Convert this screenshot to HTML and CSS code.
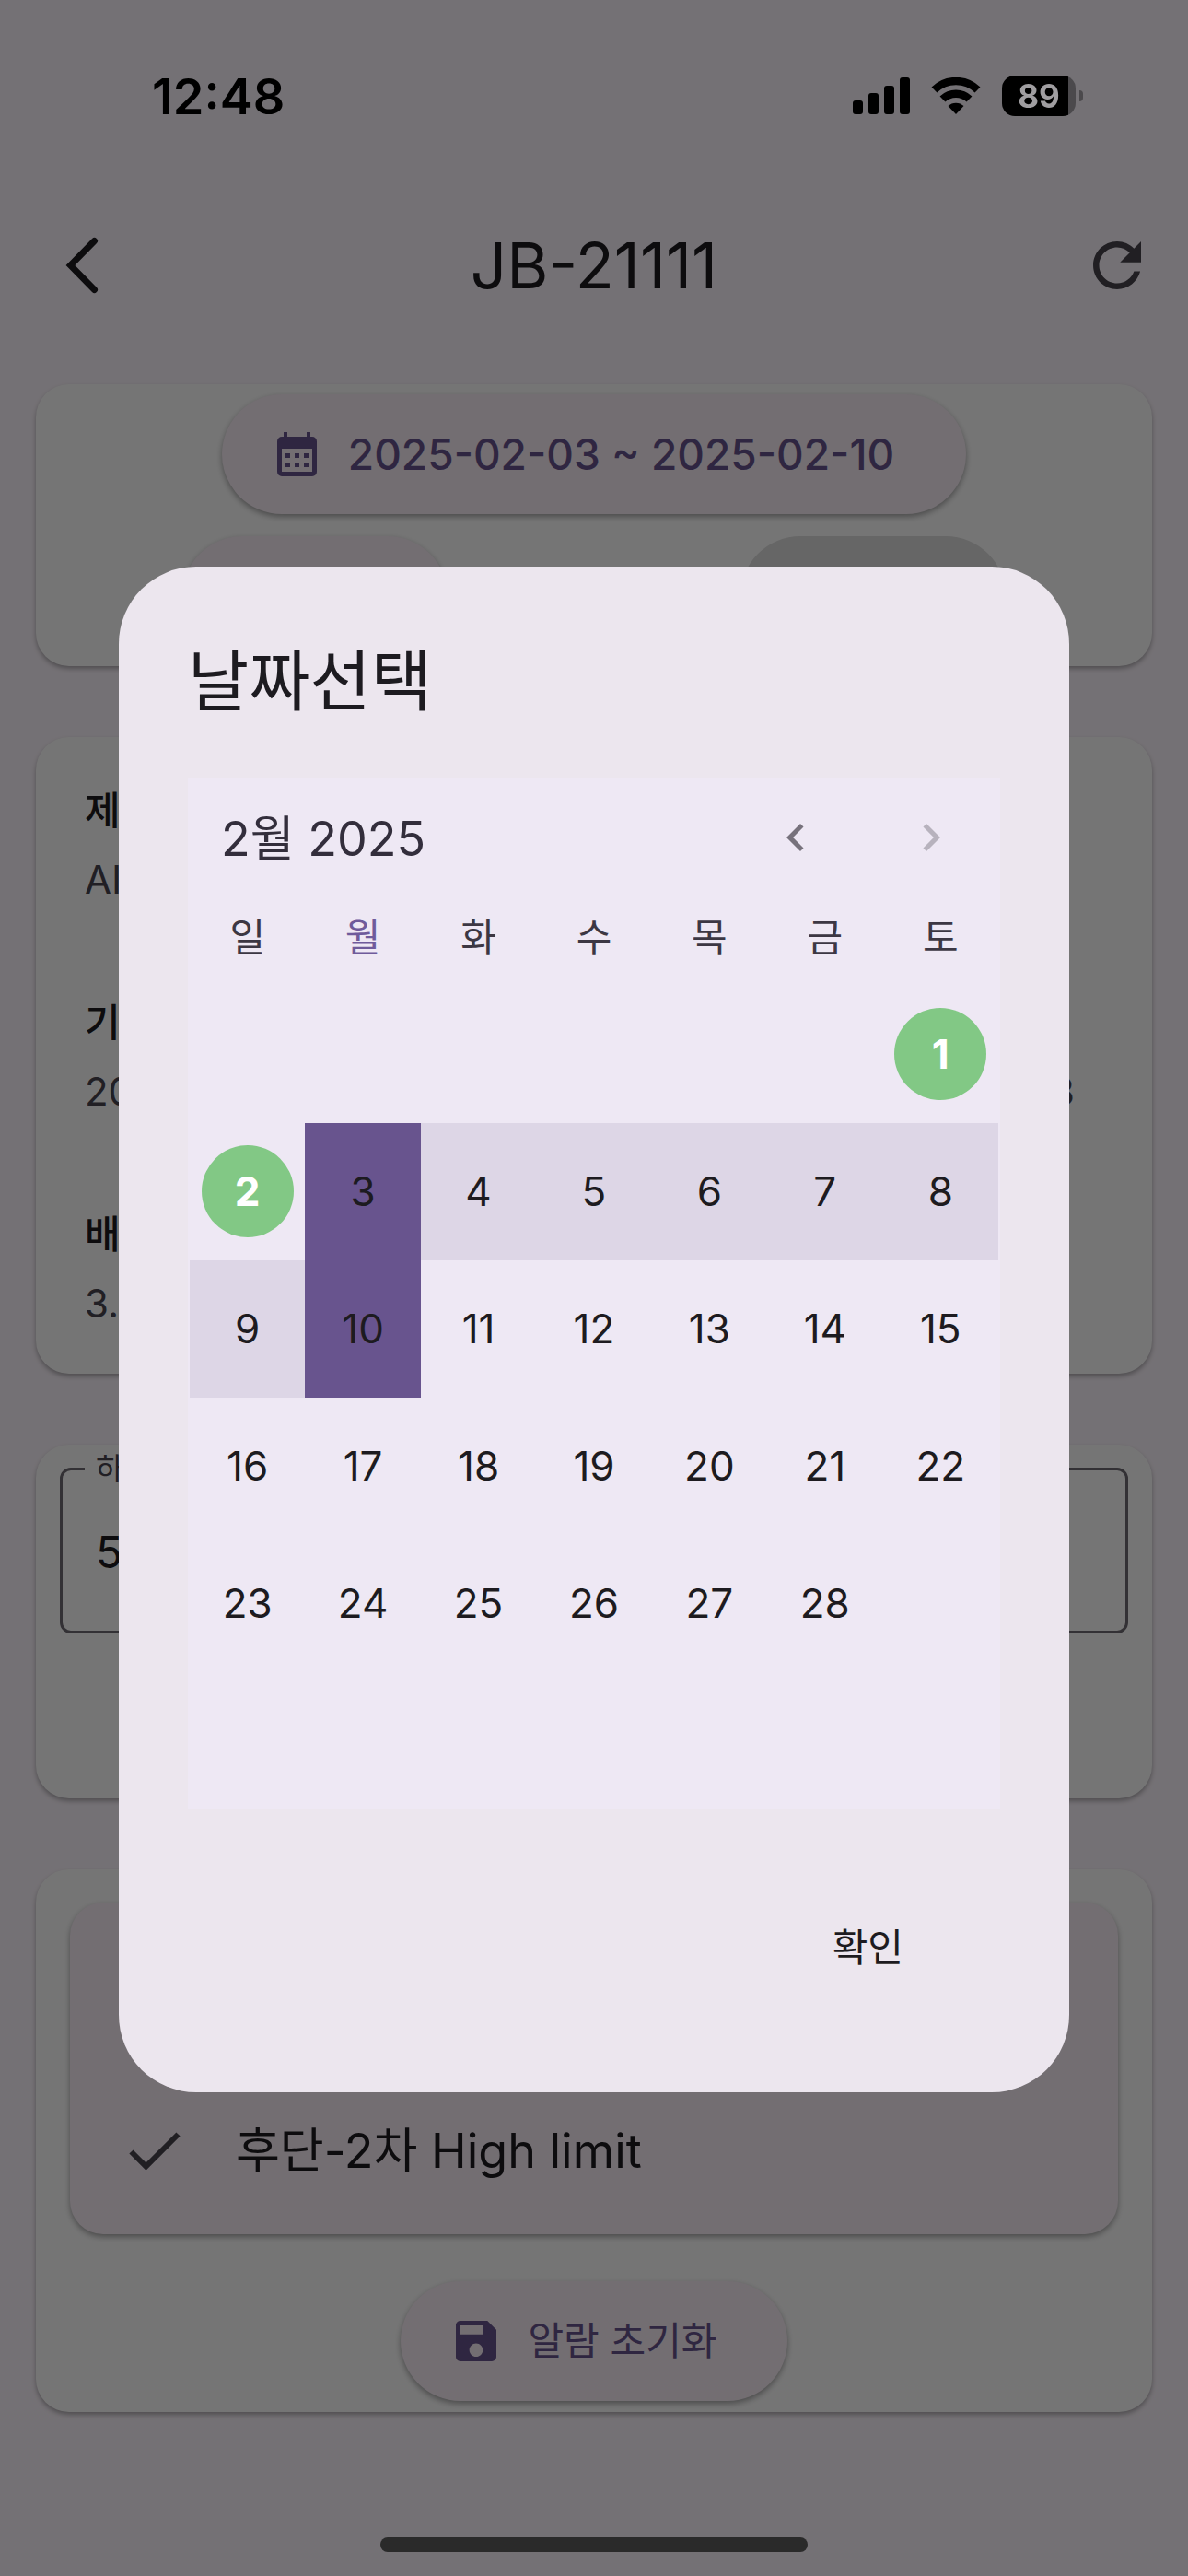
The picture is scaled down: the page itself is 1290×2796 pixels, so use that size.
FILE: index.html
```html
<!DOCTYPE html>
<html lang="ko">
<head>
    <meta charset="UTF-8">
    <meta name="viewport" content="width=device-width, initial-scale=1.0">
    <title>JB-21111</title>
    <link rel="stylesheet" href="styles.css">
</head>
<body>
    <div class="status-bar">
        <span class="time">12:48</span>
        <div class="status-icons">
            <svg width="62" height="40" viewBox="0 0 62 40">
                <rect x="0" y="25" width="11" height="15" rx="3"/>
                <rect x="17" y="17" width="11" height="23" rx="3"/>
                <rect x="34" y="9" width="11" height="31" rx="3"/>
                <rect x="51" y="0" width="11" height="40" rx="3"/>
            </svg>
            <svg class="wifi" width="54" height="40" viewBox="0 0 54 40">
                <path d="M3.500 13.500a34 34 0 0 1 47 0M12.500 23.500a21 21 0 0 1 29 0" fill="none" stroke="#000" stroke-width="8.500"/>
                <path d="M27 40l-8.500-9a12.500 12.500 0 0 1 17 0z"/>
            </svg>
            <div class="battery"><span>89</span></div>
        </div>
    </div>

    <header class="app-bar">
        <button class="icon-btn back" aria-label="뒤로">
            <svg width="36" height="62" viewBox="0 0 36 62"><path d="M31.500 4.500L5.500 31l26 26.500" fill="none" stroke="currentColor" stroke-width="7" stroke-linecap="round"/></svg>
        </button>
        <h1>JB-21111</h1>
        <button class="icon-btn refresh" aria-label="새로고침">
            <svg width="78" height="78" viewBox="0 0 24 24"><path d="M17.650 6.350C16.200 4.900 14.210 4 12 4c-4.420 0-7.990 3.580-7.990 8s3.570 8 7.990 8c3.730 0 6.840-2.550 7.730-6h-2.080c-.820 2.330-3.040 4-5.650 4-3.310 0-6-2.690-6-6s2.690-6 6-6c1.660 0 3.140.690 4.220 1.780L13 11h7V4l-2.350 2.350z" fill="currentColor"/></svg>
        </button>
    </header>

    <main>
        <section class="card search">
            <button class="pill">
                <svg width="43" height="48" viewBox="0 0 43 48" fill="currentColor">
                    <path fill-rule="evenodd" d="M7 0h4v5h21V0h4v5h2a5 5 0 0 1 5 5v33a5 5 0 0 1-5 5H5a5 5 0 0 1-5-5V10a5 5 0 0 1 5-5h2zM5 18v25h33V18z"/>
                    <path d="M9 23h5v5H9zM19 23h5v5h-5zM29 23h5v5h-5zM9 33h5v5H9zM19 33h5v5h-5zM29 33h5v5h-5z"/>
                </svg>
                2025-02-03 ~ 2025-02-10
            </button>
            <div class="actions">
                <button class="pill small" aria-label="조회"></button>
                <button class="pill small disabled" aria-label="다운로드" disabled></button>
            </div>
        </section>

        <section class="card info">
            <dl>
                <dt>제</dt>
                <dd>AI</dd>
                <dt>기</dt>
                <dd><span>20</span><span>3</span></dd>
                <dt>배</dt>
                <dd>3.</dd>
            </dl>
        </section>

        <section class="card limit">
            <fieldset>
                <legend><label for="low-limit">하</label></legend>
                <input id="low-limit" type="text" value="5">
            </fieldset>
        </section>

        <section class="card alarm">
            <div class="tile">
                <svg width="56" height="42" viewBox="0 0 56 42"><path d="M2.500 21.500L18.500 37.500L53.500 2.500" fill="none" stroke="currentColor" stroke-width="6"/></svg>
                <span>후단-2차 High limit</span>
            </div>
            <button class="pill">
                <svg width="44" height="44" viewBox="3 3 18 18"><path d="M17 3H5c-1.110 0-2 .900-2 2v14c0 1.100.890 2 2 2h14c1.100 0 2-.900 2-2V7l-4-4zm-5 16c-1.660 0-3-1.340-3-3s1.340-3 3-3 3 1.340 3 3-1.340 3-3 3zm3-10H5V5h10v4z" fill="currentColor"/></svg>
                알람 초기화
            </button>
        </section>
    </main>

    <div class="home-indicator"></div>

    <!-- Date picker -->
    <div class="scrim">
        <div class="dialog" role="dialog" aria-modal="true" aria-labelledby="dialog-title">
            <h2 id="dialog-title">날짜선택</h2>
            <div class="calendar">
                <div class="calendar-head">
                    <span class="month">2월 2025</span>
                    <button class="nav" aria-label="이전 달">
                        <svg width="60" height="60" viewBox="0 0 24 24"><path d="M15.410 7.410L14 6l-6 6 6 6 1.410-1.410L10.830 12z" fill="currentColor"/></svg>
                    </button>
                    <button class="nav" aria-label="다음 달" disabled>
                        <svg width="60" height="60" viewBox="0 0 24 24"><path d="M8.590 16.590L10 18l6-6-6-6-1.410 1.410L13.170 12z" fill="currentColor"/></svg>
                    </button>
                </div>
                <table>
                    <thead>
                        <tr><th>일</th><th class="current">월</th><th>화</th><th>수</th><th>목</th><th>금</th><th>토</th></tr>
                    </thead>
                    <tbody>
                        <tr>
                            <td></td><td></td><td></td><td></td><td></td><td></td>
                            <td><button class="marked">1</button></td>
                        </tr>
                        <tr>
                            <td><button class="marked">2</button></td>
                            <td class="edge"><button>3</button></td>
                            <td class="range"><button>4</button></td>
                            <td class="range"><button>5</button></td>
                            <td class="range"><button>6</button></td>
                            <td class="range"><button>7</button></td>
                            <td class="range"><button>8</button></td>
                        </tr>
                        <tr>
                            <td class="range"><button>9</button></td>
                            <td class="edge"><button>10</button></td>
                            <td><button>11</button></td>
                            <td><button>12</button></td>
                            <td><button>13</button></td>
                            <td><button>14</button></td>
                            <td><button>15</button></td>
                        </tr>
                        <tr>
                            <td><button>16</button></td>
                            <td><button>17</button></td>
                            <td><button>18</button></td>
                            <td><button>19</button></td>
                            <td><button>20</button></td>
                            <td><button>21</button></td>
                            <td><button>22</button></td>
                        </tr>
                        <tr>
                            <td><button>23</button></td>
                            <td><button>24</button></td>
                            <td><button>25</button></td>
                            <td><button>26</button></td>
                            <td><button>27</button></td>
                            <td><button>28</button></td>
                            <td></td>
                        </tr>
                        <tr>
                            <td></td><td></td><td></td><td></td><td></td><td></td><td></td>
                        </tr>
                    </tbody>
                </table>
            </div>
            <div class="dialog-actions">
                <button class="confirm">확인</button>
            </div>
        </div>
    </div>
</body>
</html>
```

FILE: styles.css
```css
* {
    margin: 0;
    padding: 0;
    box-sizing: border-box;
}
body {
    display: flex;
    flex-direction: column;
    min-height: 100vh;
    background: #fdf6fe;
    font-family: Inter, "Noto Sans CJK KR", sans-serif;
    font-size: 44px;
    color: #1d1b20;
}
button, input {
    border: none;
    background: none;
    font: inherit;
    color: inherit;
}
svg {
    display: block;
    flex: none;
}

/* Status bar */
.status-bar {
    position: relative;
    z-index: 2;
    display: flex;
    justify-content: space-between;
    align-items: center;
    height: 208px;
    padding: 0 122px 0 165px;
    color: #000;
}
.time {
    font-size: 54px;
    font-weight: 600;
}
.status-icons {
    display: flex;
    align-items: center;
    gap: 23px;
}
.battery {
    position: relative;
    width: 80px;
    height: 44px;
    border-radius: 14px;
    background: linear-gradient(to right, #000 72px, #4b494c 72px);
    color: #a09ea1;
    font-size: 35px;
    font-weight: 700;
    line-height: 44px;
    text-align: center;
}
.battery::after {
    content: "";
    position: absolute;
    left: 84px;
    top: 16px;
    width: 4px;
    height: 12px;
    border-radius: 0 4px 4px 0;
    background: #4b494c;
}

/* App bar */
.app-bar {
    display: flex;
    justify-content: space-between;
    align-items: center;
    height: 160px;
    padding: 0 38px;
}
.app-bar h1 {
    font-size: 69px;
    font-weight: 400;
}
.icon-btn {
    display: flex;
    width: 78px;
}
.icon-btn.back {
    padding-left: 33px;
}
.icon-btn.refresh {
    color: #48454e;
}

main {
    display: flex;
    flex-direction: column;
    gap: 77px;
    padding: 49px 39px 0;
}
.card {
    display: flex;
    flex-direction: column;
    align-items: center;
    border-radius: 36px;
    background: #fff;
    box-shadow: 0 3px 5px rgba(0, 0, 0, 0.3);
}
.pill {
    display: flex;
    align-items: center;
    justify-content: center;
    gap: 34px;
    height: 130px;
    padding: 0 78px 0 60px;
    border-radius: 65px;
    background: #faeff8;
    box-shadow: 0 3px 6px rgba(0, 0, 0, 0.35);
    color: #68548e;
    font-size: 46px;
    font-weight: 500;
}

.search {
    gap: 24px;
    padding: 11px 0;
}
.actions {
    display: flex;
    justify-content: space-around;
    width: 100%;
}
.pill.small {
    width: 288px;
}
.pill.disabled {
    background: #dedede;
    box-shadow: none;
}

.info {
    align-items: stretch;
    padding: 42px 84px 39px 53px;
}
.info dt {
    height: 75px;
    font-size: 42px;
    font-weight: 500;
    line-height: 75px;
}
.info dd {
    display: flex;
    justify-content: space-between;
    height: 155px;
    color: #49454f;
    font-size: 42px;
    line-height: 75px;
}
.info dd:last-child {
    height: 75px;
}

.limit {
    align-items: stretch;
    padding: 2px 26px 179px;
}
.limit fieldset {
    padding: 0 36px;
    border: 3px solid #6f6c73;
    border-radius: 12px;
}
.limit legend {
    margin-left: -12px;
    padding: 0 12px;
    color: #49454f;
    font-size: 33px;
    line-height: 48px;
}
.limit input {
    display: block;
    width: 100%;
    height: 152px;
    padding-bottom: 20px;
    font-size: 48px;
}

.alarm {
    gap: 51px;
    padding: 36px 37px 12px;
}
.alarm .pill {
    padding: 0 76px 0 60px;
    font-size: 42px;
    font-weight: 400;
    line-height: 60px;
}
.tile {
    display: flex;
    align-items: flex-end;
    gap: 60px;
    width: 100%;
    height: 360px;
    padding: 0 64px 54px;
    border-radius: 36px;
    background: #faeff8;
    box-shadow: 0 3px 6px rgba(0, 0, 0, 0.35);
    font-size: 52px;
    line-height: 72px;
}
.tile svg {
    margin-bottom: 15px;
    color: #48454e;
}

.home-indicator {
    position: relative;
    z-index: 2;
    width: 36%;
    height: 16px;
    margin: auto auto 26px;
    border-radius: 8px;
    background: #2a2a2a;
}

/* Dialog */
.scrim {
    position: fixed;
    inset: 0;
    z-index: 1;
    display: flex;
    justify-content: center;
    align-items: center;
    padding-top: 89px;
    background: rgba(0, 0, 0, 0.54);
}
.dialog {
    width: 80%;
    padding: 76px 75px 100px;
    border-radius: 84px;
    background: #ece6ee;
}
.dialog h2 {
    margin-bottom: 57px;
    font-size: 72px;
    font-weight: 400;
    line-height: 96px;
}
.calendar {
    padding: 0 2px;
    background: #eee8f4;
}
.calendar-head {
    display: flex;
    align-items: center;
    height: 130px;
    padding: 0 0 0 34px;
    color: #49454f;
}
.month {
    flex: 1;
    padding-bottom: 4px;
    color: #332e3c;
    font-size: 52px;
}
.nav {
    display: flex;
    justify-content: center;
    width: 147px;
    color: #77727c;
}
.nav:disabled {
    color: #b7b2bd;
}
.calendar table {
    width: 100%;
    table-layout: fixed;
    border-collapse: collapse;
}
.calendar th {
    height: 96px;
    padding-bottom: 14px;
    color: #3c3743;
    font-size: 42px;
    font-weight: 400;
}
.calendar th.current {
    color: #6f5b9b;
}
.calendar td {
    height: 149px;
}
.calendar td button {
    display: block;
    width: 100px;
    height: 100px;
    margin: 0 auto;
    border-radius: 50%;
}
.calendar .range {
    background: #ddd6e6;
}
.calendar .edge {
    background: #68548e;
}
.calendar td .marked {
    background: #82c885;
    color: #fff;
    font-weight: 700;
}
.dialog-actions {
    display: flex;
    justify-content: flex-end;
    margin-top: 87px;
    padding-right: 69px;
}
.confirm {
    height: 120px;
    padding: 0 36px;
    font-size: 42px;
}
```
